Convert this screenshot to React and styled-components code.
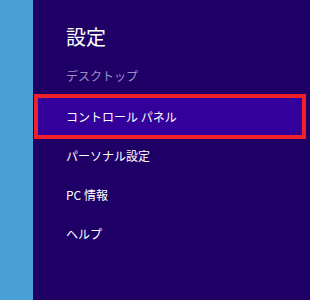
import React from "react";
import styled, { createGlobalStyle } from "styled-components";

const Global = createGlobalStyle`
  html, body { margin: 0; padding: 0; }
  body { width: 310px; height: 300px; overflow: hidden; font-family: "Noto Sans CJK JP", "Noto Sans", sans-serif; }
`;

const Screen = styled.div`
  display: flex;
  width: 310px;
  height: 300px;
`;

const Strip = styled.div`
  width: 33px;
  flex: none;
  background: #4a9fd6;
`;

const Panel = styled.div`
  flex: 1;
  background: #1f0066;
  padding: 23px 4px 0 1px;
  display: flex;
  flex-direction: column;
`;

const Title = styled.div`
  color: #ffffff;
  font-size: 20px;
  line-height: 28px;
  padding-left: 32px;
`;

const Sub = styled.div`
  color: #9a90c8;
  font-size: 12px;
  line-height: 16px;
  margin-top: 17px;
  padding-left: 32px;
`;

const Item = styled.div`
  height: ${(p) => (p.$active ? 45 : 39)}px;
  box-sizing: border-box;
  margin-top: ${(p) => p.$mt || 0}px;
  display: flex;
  align-items: center;
  padding-left: ${(p) => (p.$active ? 28 : 32)}px;
  color: #ffffff;
  font-size: 12px;
  background: ${(p) => (p.$active ? "#33009b" : "transparent")};
  border: ${(p) => (p.$active ? "4px solid #f0202a" : "none")};
`;

export default function App() {
  return (
    <>
      <Global />
      <Screen>
        <Strip />
        <Panel>
          <Title>設定</Title>
          <Sub>デスクトップ</Sub>
          <Item $active $mt={10}>コントロール パネル</Item>
          <Item $mt={-3}>パーソナル設定</Item>
          <Item>PC 情報</Item>
          <Item>ヘルプ</Item>
        </Panel>
      </Screen>
    </>
  );
}
